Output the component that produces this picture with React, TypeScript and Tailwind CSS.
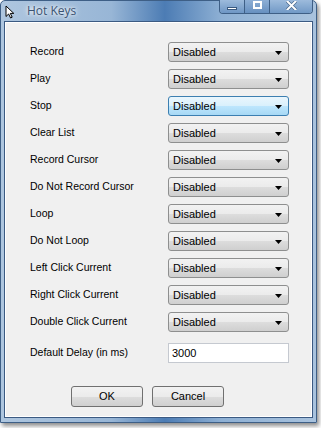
import React from 'react';

const hotKeys = [
  'Record',
  'Play',
  'Stop',
  'Clear List',
  'Record Cursor',
  'Do Not Record Cursor',
  'Loop',
  'Do Not Loop',
  'Left Click Current',
  'Right Click Current',
  'Double Click Current',
];

const Arrow: React.FC = () => (
  <svg width="7" height="4" viewBox="0 0 7 4" className="absolute right-[6px] top-[8px]">
    <polygon points="0,0 7,0 3.5,4" fill="#000" />
  </svg>
);

const Select: React.FC<{ focused?: boolean }> = ({ focused }) => (
  <div
    className={`relative w-[121px] h-[20px] rounded-[3px] border flex items-center pl-[4px] text-[11px] text-black ${
      focused
        ? 'border-[#3c7fb1] bg-[linear-gradient(#eaf6fd_0%,#d9f0fc_50%,#bee6fd_50%,#a7d9f5_100%)]'
        : 'border-[#8e8f8f] bg-[linear-gradient(#f2f2f2_0%,#ebebeb_50%,#dddddd_50%,#cfcfcf_100%)]'
    }`}
  >
    Disabled
    <Arrow />
  </div>
);

const Button: React.FC<{ label: string }> = ({ label }) => (
  <div className="w-[72px] h-[21px] rounded-[3px] border border-[#707070] bg-[linear-gradient(#f2f2f2_0%,#ebebeb_50%,#dddddd_50%,#cfcfcf_100%)] flex items-center justify-center text-[11px] text-black">
    {label}
  </div>
);

export default function App() {
  return (
    <div className="w-[321px] h-[428px] bg-white overflow-hidden" style={{ fontFamily: '"Liberation Sans", Arial, sans-serif' }}>
      <div className="w-[317px] h-[423px] rounded-t-[5px] bg-[linear-gradient(90deg,#aec6df_0%,#98b6d6_35%,#4c7cb4_52%,#8eb0d4_70%,#a9c3de_100%)] shadow-[2px_3px_4px_rgba(0,0,0,0.45)] flex flex-col px-[3px] pb-[4px] border border-[#3e5f86]">
        {/* title bar */}
        <div className="relative h-[20px] flex items-center shrink-0">
          <svg width="10" height="14" viewBox="0 0 10 14" className="ml-[1px] mt-[1px]">
            <path d="M1 1 L1 11.5 L3.6 9 L5.6 13 L7.2 12.2 L5.3 8.4 L8.8 8.4 Z" fill="#fff" stroke="#000" strokeWidth="1" strokeLinejoin="round" />
          </svg>
          <span className="ml-[12px] text-[12px] text-[#3a5372] [text-shadow:0_0_6px_#fff,0_0_3px_#fff]" style={{ fontFamily: '"Open Sans", "Liberation Sans", sans-serif' }}>
            Hot Keys
          </span>
          <div className="absolute right-[0px] top-[-1px] flex h-[14px] border border-[#3e5f86] border-t-0 rounded-b-[4px] overflow-hidden">
            <div className="w-[25px] h-full border-r border-[#3e5f86] bg-[linear-gradient(#9dbbdc,#6e96c4)] flex items-center justify-center">
              <div className="w-[10px] h-[3px] bg-white border border-[#3a5a80] mt-[3px]" />
            </div>
            <div className="w-[25px] h-full border-r border-[#3e5f86] bg-[linear-gradient(#8eafd5,#6790c0)] flex items-center justify-center">
              <div className="w-[9px] h-[8px] border-2 border-white -mt-[3px]" />
            </div>
            <div className="w-[42px] h-full bg-[linear-gradient(#9dbbdc,#7199c6)] flex items-center justify-center">
              <svg width="11" height="9" viewBox="0 0 11 9" className="-mt-[3px]">
                <path d="M1.5 0.5 L9.5 8.5 M9.5 0.5 L1.5 8.5" stroke="#4a6a90" strokeWidth="3.4" strokeLinecap="square" />
                <path d="M1.5 0.5 L9.5 8.5 M9.5 0.5 L1.5 8.5" stroke="#fff" strokeWidth="2" strokeLinecap="square" />
              </svg>
            </div>
          </div>
        </div>

        {/* client area */}
        <div className="flex-1 bg-[#f0f0f0] border border-[#3b5a82] shadow-[inset_0_0_0_1px_#ffffff] flex flex-col pt-[20px] pl-[25px]">
          <div className="flex flex-col gap-[7px]">
            {hotKeys.map((k, i) => (
              <div key={k} className="flex items-center h-[20px]">
                <span className="w-[138px] text-[10.5px] text-black">{k}</span>
                <Select focused={i === 2} />
              </div>
            ))}
          </div>
          <div className="flex items-center h-[20px] mt-[11px]">
            <span className="w-[138px] text-[10.5px] text-black">Default Delay (in ms)</span>
            <div className="w-[121px] h-[20px] bg-white border border-[#c5c9d0] flex items-center pl-[3px] text-[11px] text-black">
              3000
            </div>
          </div>
          <div className="flex gap-[9px] mt-[23px] pl-[41px]">
            <Button label="OK" />
            <Button label="Cancel" />
          </div>
        </div>
      </div>
    </div>
  );
}
